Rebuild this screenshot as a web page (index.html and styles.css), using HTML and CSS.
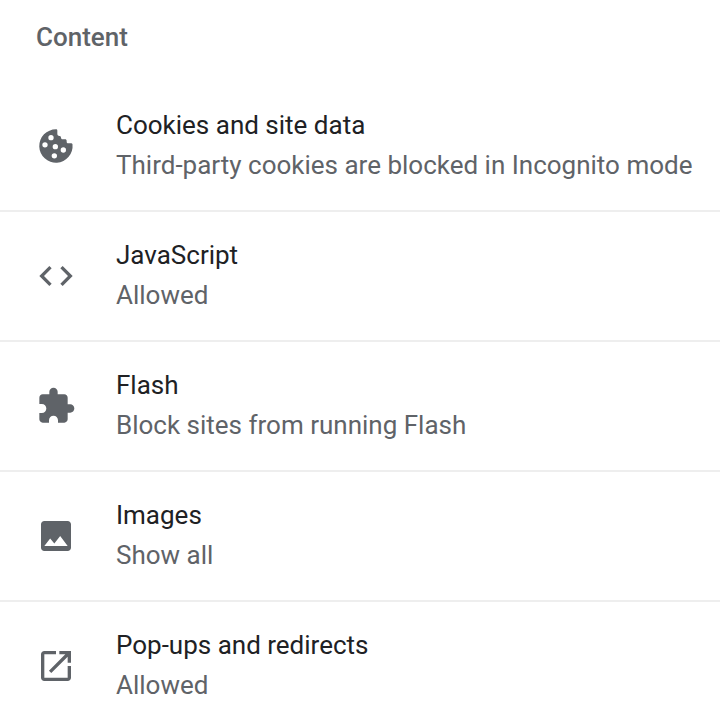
FILE: index.html
```html
<!DOCTYPE html>
<html lang="en">
<head>
  <meta charset="UTF-8">
  <meta name="viewport" content="width=device-width, initial-scale=1">
  <title>Site settings</title>
  <link rel="stylesheet" href="styles.css">
</head>
<body>

<main>
  <h2 class="section-title">Content</h2>

  <ul class="settings">
    <li class="row">
      <svg class="icon" viewBox="0 0 24 24" aria-hidden="true">
        <path fill-rule="evenodd" d="M21.9 11c-.1-.4-.4-.6-.8-.6h-1.7c-.6 0-1-.4-1-1v-.6c0-.5-.4-.9-.9-.9h-1.6c-.5 0-.9-.4-.9-.9 0-.6-.4-1-.9-1-.7 0-1.3-.5-1.3-1.2V2.7c0-.4-.3-.7-.8-.7A10 10 0 1 0 21.9 11zM9 5.4a1.6 1.6 0 1 1 0 3.2 1.6 1.6 0 0 1 0-3.2zM5.4 9.7a1.6 1.6 0 1 1 0 3.2 1.6 1.6 0 0 1 0-3.2zM11.6 10.8a1.6 1.6 0 1 1 0 3.2 1.6 1.6 0 0 1 0-3.2zM16.4 12.8a1.6 1.6 0 1 1 0 3.2 1.6 1.6 0 0 1 0-3.2zM11 16.3a1.6 1.6 0 1 1 0 3.2 1.6 1.6 0 0 1 0-3.2z"/>
      </svg>
      <div class="text">
        <div class="label">Cookies and site data</div>
        <div class="sub-label">Third-party cookies are blocked in Incognito mode</div>
      </div>
    </li>
    <li class="row">
      <svg class="icon" viewBox="0 0 24 24" aria-hidden="true">
        <path d="M9.4 16.6L4.8 12l4.6-4.6L8 6l-6 6 6 6 1.4-1.4zm5.2 0l4.6-4.6-4.6-4.6L16 6l6 6-6 6-1.4-1.4z"/>
      </svg>
      <div class="text">
        <div class="label">JavaScript</div>
        <div class="sub-label">Allowed</div>
      </div>
    </li>
    <li class="row">
      <svg class="icon" viewBox="0 0 24 24" aria-hidden="true">
        <path d="M20.5 11H19V7c0-1.1-.9-2-2-2h-4V3.5C13 2.12 11.88 1 10.5 1S8 2.12 8 3.5V5H4c-1.1 0-1.99.9-1.99 2v3.8H3.5c1.49 0 2.7 1.21 2.7 2.7s-1.21 2.7-2.7 2.7H2V20c0 1.1.9 2 2 2h3.8v-1.5c0-1.49 1.21-2.7 2.7-2.7 1.49 0 2.7 1.21 2.7 2.7V22H17c1.1 0 2-.9 2-2v-4h1.5c1.38 0 2.5-1.12 2.5-2.5S21.88 11 20.5 11z"/>
      </svg>
      <div class="text">
        <div class="label">Flash</div>
        <div class="sub-label">Block sites from running Flash</div>
      </div>
    </li>
    <li class="row">
      <svg class="icon" viewBox="0 0 24 24" aria-hidden="true">
        <path d="M21 19V5c0-1.1-.9-2-2-2H5c-1.1 0-2 .9-2 2v14c0 1.1.9 2 2 2h14c1.1 0 2-.9 2-2zM8.5 13.5l2.5 3.01L14.5 12l4.5 6H5l3.5-4.5z"/>
      </svg>
      <div class="text">
        <div class="label">Images</div>
        <div class="sub-label">Show all</div>
      </div>
    </li>
    <li class="row">
      <svg class="icon" viewBox="0 0 24 24" aria-hidden="true">
        <path d="M19 19H5V5h7V3H5c-1.11 0-2 .9-2 2v14c0 1.1.89 2 2 2h14c1.1 0 2-.9 2-2v-7h-2v7zM14 3v2h3.59l-9.83 9.83 1.41 1.41L19 6.41V10h2V3h-7z"/>
      </svg>
      <div class="text">
        <div class="label">Pop-ups and redirects</div>
        <div class="sub-label">Allowed</div>
      </div>
    </li>
  </ul>
</main>

</body>
</html>
```
FILE: styles.css
```css
body {
  margin: 0;
  background-color: #fff;
  color: #202124;
  font-family: Roboto, Arial, sans-serif;
  font-size: 26px;
  line-height: 40px;
}

.section-title {
  margin: 0;
  padding: 17px 36px 25px;
  color: #5f6368;
  font-size: 26px;
  font-weight: 500;
  line-height: 40px;
}

.settings {
  margin: 0;
  padding: 0;
  list-style: none;
}

.row {
  display: flex;
  align-items: center;
  gap: 40px;
  padding: 23px 0 25px 36px;
}

.row + .row {
  border-top: 2px solid #eee;
}

.row:last-child {
  padding-bottom: 0;
}

.icon {
  flex: none;
  width: 40px;
  height: 40px;
  margin-top: 2px;
  fill: #5f6368;
}

.sub-label {
  color: #5f6368;
}
```
